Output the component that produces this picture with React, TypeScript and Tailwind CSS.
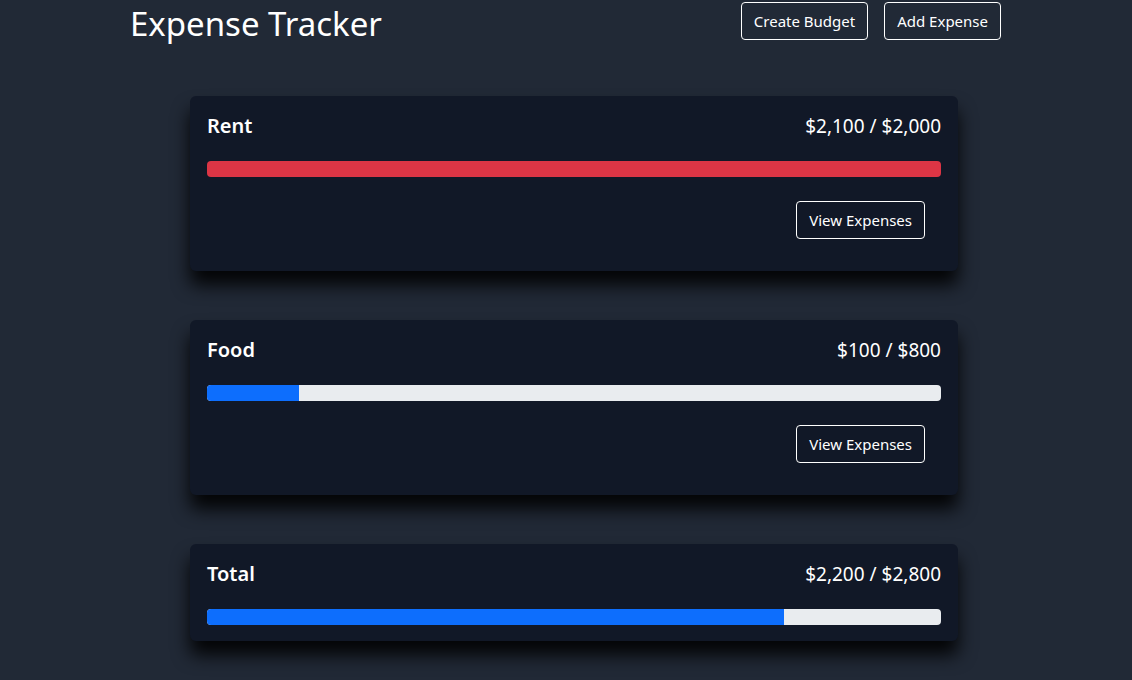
import React from "react";

type Budget = { name: string; spent: number; max: number; showButton: boolean };

const budgets: Budget[] = [
  { name: "Rent", spent: 2100, max: 2000, showButton: true },
  { name: "Food", spent: 100, max: 800, showButton: true },
  { name: "Total", spent: 2200, max: 2800, showButton: false },
];

const money = (n: number) => "$" + n.toLocaleString("en-US");

function BudgetCard({ b }: { b: Budget }) {
  const ratio = Math.min(b.spent / b.max, 1);
  const over = b.spent > b.max;
  return (
    <div className="rounded-md bg-[#111827] px-[17px] py-4 shadow-[0_14px_18px_rgba(0,0,0,0.9)]">
      <div className="flex items-center justify-between">
        <span className="text-[20px] font-semibold leading-7 text-white">{b.name}</span>
        <span className="text-[19px] leading-7 text-white">
          {money(b.spent)} / {money(b.max)}
        </span>
      </div>
      <div className="mt-[21px] h-4 overflow-hidden rounded bg-[#e9ecef]">
        <div className={over ? "h-full bg-[#dc3545]" : "h-full bg-[#0d6efd]"} style={{ width: `${ratio * 100}%` }} />
      </div>
      {b.showButton && (
        <div className="mt-6 mb-4 mr-4 flex justify-end">
          <button className="h-[38px] rounded border border-white px-3 text-[15px] text-white">View Expenses</button>
        </div>
      )}
    </div>
  );
}

export default function App() {
  return (
    <div className="min-h-[680px] bg-[#212936] font-['Noto_Sans',sans-serif]">
      <div className="ml-[130px] w-[871px]">
        <div className="flex h-[40px] items-start justify-between pt-[2px]">
          <h1 className="-mt-[2px] text-[33px] leading-[48px] text-white">Expense Tracker</h1>
          <div className="flex gap-4">
            <button className="h-[38px] rounded border border-white px-3 text-[15px] text-white">Create Budget</button>
            <button className="h-[38px] rounded border border-white px-3 text-[15px] text-white">Add Expense</button>
          </div>
        </div>
        <div className="ml-[60px] mt-[56px] flex w-[768px] flex-col gap-[49px]">
          {budgets.map((b) => (
            <BudgetCard key={b.name} b={b} />
          ))}
        </div>
      </div>
    </div>
  );
}
